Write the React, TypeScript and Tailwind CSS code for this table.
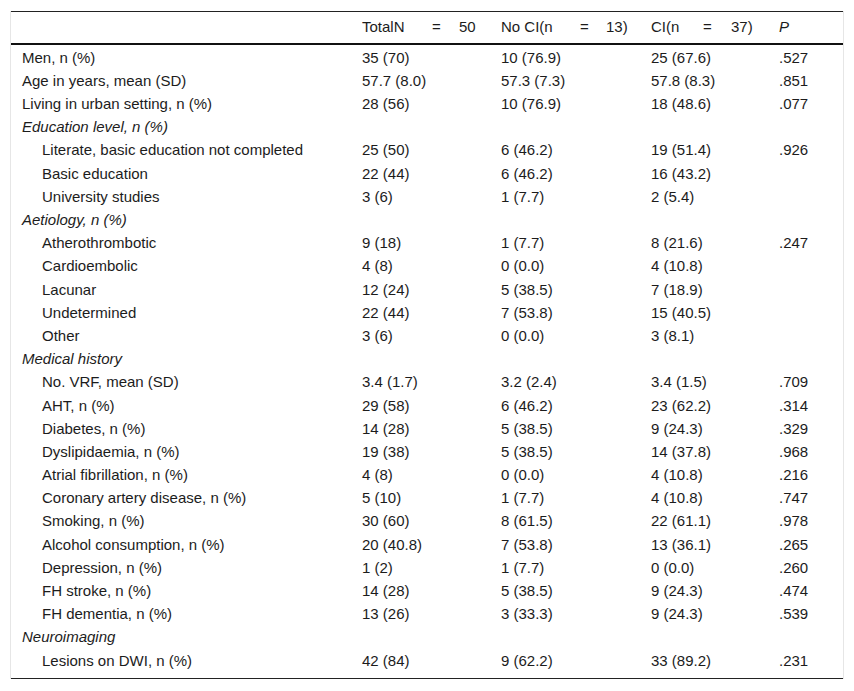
import React from "react";

type Row =
  | { kind: "section"; label: string }
  | { kind: "data"; label: string; indent?: boolean; v: [string, string, string, string] };

const rows: Row[] = [
  { kind: "data", label: "Men, n (%)", v: ["35 (70)", "10 (76.9)", "25 (67.6)", ".527"] },
  { kind: "data", label: "Age in years, mean (SD)", v: ["57.7 (8.0)", "57.3 (7.3)", "57.8 (8.3)", ".851"] },
  { kind: "data", label: "Living in urban setting, n (%)", v: ["28 (56)", "10 (76.9)", "18 (48.6)", ".077"] },
  { kind: "section", label: "Education level, n (%)" },
  { kind: "data", indent: true, label: "Literate, basic education not completed", v: ["25 (50)", "6 (46.2)", "19 (51.4)", ".926"] },
  { kind: "data", indent: true, label: "Basic education", v: ["22 (44)", "6 (46.2)", "16 (43.2)", ""] },
  { kind: "data", indent: true, label: "University studies", v: ["3 (6)", "1 (7.7)", "2 (5.4)", ""] },
  { kind: "section", label: "Aetiology, n (%)" },
  { kind: "data", indent: true, label: "Atherothrombotic", v: ["9 (18)", "1 (7.7)", "8 (21.6)", ".247"] },
  { kind: "data", indent: true, label: "Cardioembolic", v: ["4 (8)", "0 (0.0)", "4 (10.8)", ""] },
  { kind: "data", indent: true, label: "Lacunar", v: ["12 (24)", "5 (38.5)", "7 (18.9)", ""] },
  { kind: "data", indent: true, label: "Undetermined", v: ["22 (44)", "7 (53.8)", "15 (40.5)", ""] },
  { kind: "data", indent: true, label: "Other", v: ["3 (6)", "0 (0.0)", "3 (8.1)", ""] },
  { kind: "section", label: "Medical history" },
  { kind: "data", indent: true, label: "No. VRF, mean (SD)", v: ["3.4 (1.7)", "3.2 (2.4)", "3.4 (1.5)", ".709"] },
  { kind: "data", indent: true, label: "AHT, n (%)", v: ["29 (58)", "6 (46.2)", "23 (62.2)", ".314"] },
  { kind: "data", indent: true, label: "Diabetes, n (%)", v: ["14 (28)", "5 (38.5)", "9 (24.3)", ".329"] },
  { kind: "data", indent: true, label: "Dyslipidaemia, n (%)", v: ["19 (38)", "5 (38.5)", "14 (37.8)", ".968"] },
  { kind: "data", indent: true, label: "Atrial fibrillation, n (%)", v: ["4 (8)", "0 (0.0)", "4 (10.8)", ".216"] },
  { kind: "data", indent: true, label: "Coronary artery disease, n (%)", v: ["5 (10)", "1 (7.7)", "4 (10.8)", ".747"] },
  { kind: "data", indent: true, label: "Smoking, n (%)", v: ["30 (60)", "8 (61.5)", "22 (61.1)", ".978"] },
  { kind: "data", indent: true, label: "Alcohol consumption, n (%)", v: ["20 (40.8)", "7 (53.8)", "13 (36.1)", ".265"] },
  { kind: "data", indent: true, label: "Depression, n (%)", v: ["1 (2)", "1 (7.7)", "0 (0.0)", ".260"] },
  { kind: "data", indent: true, label: "FH stroke, n (%)", v: ["14 (28)", "5 (38.5)", "9 (24.3)", ".474"] },
  { kind: "data", indent: true, label: "FH dementia, n (%)", v: ["13 (26)", "3 (33.3)", "9 (24.3)", ".539"] },
  { kind: "section", label: "Neuroimaging" },
  { kind: "data", indent: true, label: "Lesions on DWI, n (%)", v: ["42 (84)", "9 (62.2)", "33 (89.2)", ".231"] },
];

const grid = "grid grid-cols-[351px_139px_150px_128px_1fr]";

export default function App() {
  return (
    <div
      className="bg-white w-[854px] h-[691px] pt-[11px] text-[15px] text-[#1c1c1c]"
      style={{ fontFamily: '"Liberation Sans", Arial, sans-serif' }}
    >
      <div className="ml-[10px] w-[834px] border-x border-[#e6e6e6]">
        <div className="border-t border-[#222] border-b-2 border-b-[#111]">
          <div className={`${grid} h-[31px] items-center whitespace-nowrap`}>
            <div />
            <div className="flex">
              <span className="w-[70px]">TotalN</span>
              <span className="w-[27px]">=</span>
              <span>50</span>
            </div>
            <div className="flex">
              <span className="w-[79px]">No CI(n</span>
              <span className="w-[26px]">=</span>
              <span>13)</span>
            </div>
            <div className="flex">
              <span className="w-[52px]">CI(n</span>
              <span className="w-[28px]">=</span>
              <span>37)</span>
            </div>
            <div className="italic">P</div>
          </div>
        </div>
        <div className="pt-[1.4px] pb-[6px] border-b border-[#222]">
          {rows.map((r, i) =>
            r.kind === "section" ? (
              <div key={i} className="h-[23.2px] flex items-center pl-[11px] italic">
                {r.label}
              </div>
            ) : (
              <div key={i} className={`${grid} h-[23.2px] items-center whitespace-nowrap`}>
                <div className={r.indent ? "pl-[31px]" : "pl-[11px]"}>{r.label}</div>
                <div>{r.v[0]}</div>
                <div>{r.v[1]}</div>
                <div>{r.v[2]}</div>
                <div>{r.v[3]}</div>
              </div>
            )
          )}
        </div>
      </div>
    </div>
  );
}
